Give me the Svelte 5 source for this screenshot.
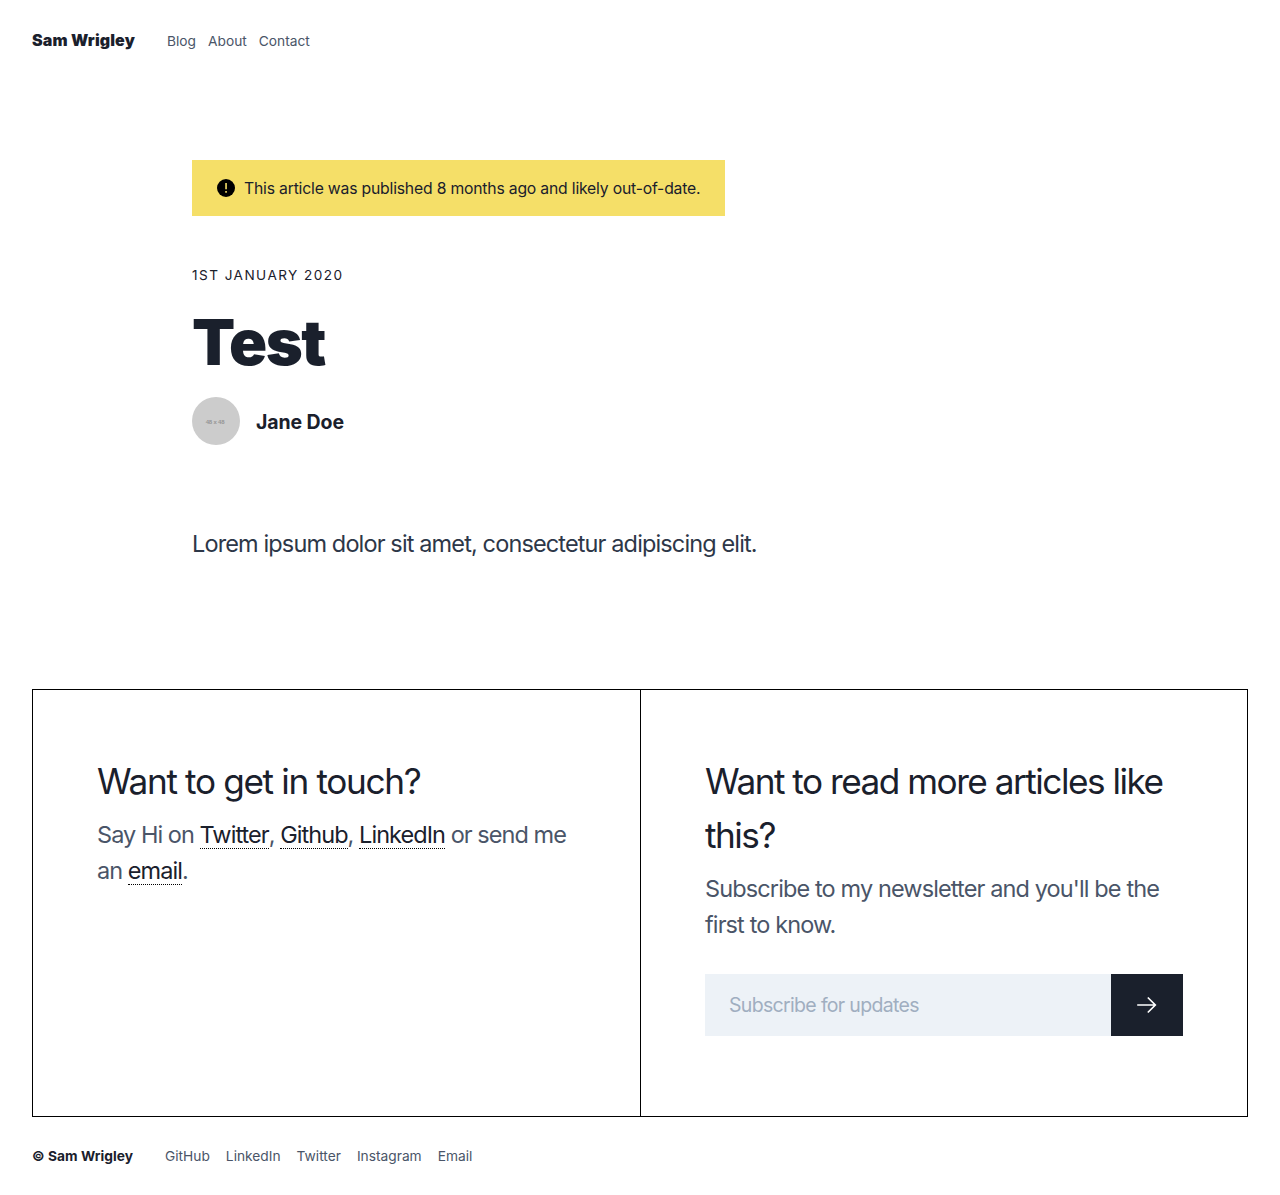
<script>
  const nav = ['Blog', 'About', 'Contact'];
  const social = ['GitHub', 'LinkedIn', 'Twitter', 'Instagram', 'Email'];
</script>

<div class="page">
  <header>
    <a class="brand" href="#home">Sam Wrigley</a>
    <nav>{#each nav as item}<a href="#{item}">{item}</a>{/each}</nav>
  </header>

  <article>
    <div class="notice">
      <svg width="20" height="20" viewBox="0 0 20 20"><circle cx="10" cy="10" r="9" fill="#000" /><path d="M9.25 5h1.6v6.2h-1.6zM9.25 13h1.6v1.7h-1.6z" fill="#f5df68" /></svg>
      <span>This article was published 8 months ago and likely out-of-date.</span>
    </div>
    <time>1st January 2020</time>
    <h1>Test</h1>
    <div class="author">
      <span class="avatar"><span>48 x 48</span></span>
      <strong>Jane Doe</strong>
    </div>
    <p class="body">Lorem ipsum dolor sit amet, consectetur adipiscing elit.</p>
  </article>

  <section class="panels">
    <div class="panel">
      <h2>Want to get in touch?</h2>
      <p>Say Hi on <a href="#tw">Twitter</a>, <a href="#gh">Github</a>, <a href="#li">LinkedIn</a> or send me<br />an <a href="#em">email</a>.</p>
    </div>
    <div class="panel newsletter">
      <h2>Want to read more articles like<br />this?</h2>
      <p>Subscribe to my newsletter and you'll be the<br />first to know.</p>
      <form>
        <input type="email" placeholder="Subscribe for updates" aria-label="Email" />
        <button type="button" aria-label="Subscribe">
          <svg width="24" height="24" viewBox="0 0 24 24" fill="none" stroke="#fff" stroke-width="1.7"><path d="M2.2 12H20.3M12.8 4.5L20.3 12L12.8 19.5" /></svg>
        </button>
      </form>
    </div>
  </section>

  <footer>
    <strong>© Sam Wrigley</strong>
    <nav>{#each social as item}<a href="#{item}">{item}</a>{/each}</nav>
  </footer>
</div>

<style>
  :global(body) { background: #fff; }
  .page { font-family: Inter, sans-serif; color: #1a202c; line-height: 1.5; font-size: 16px; }
  .page, .page * { box-sizing: border-box; }
  a { color: inherit; text-decoration: none; }
  h1, h2, p { margin: 0; font-weight: 400; }
  svg { display: block; flex-shrink: 0; }
  header { display: flex; align-items: center; height: 80px; padding: 0 32px; }
  .brand { font-weight: 900; letter-spacing: 0.12px; width: 135px; white-space: nowrap; }
  header nav { display: flex; gap: 12px; font-size: 13.75px; color: #4a5568; padding-top: 3px; }
  article { margin: 80px 192px 0; height: 529px; }
  .notice { display: flex; align-items: center; gap: 8px; width: 533px; height: 56px; padding: 0 24px; background: #f5df68; white-space: nowrap; font-size: 15.75px; letter-spacing: -0.2px; }
  .notice span { padding-top: 2px; }
  time { display: block; margin-top: 49px; font-size: 13.6px; line-height: 21px; letter-spacing: 1.45px; text-transform: uppercase; }
  h1 { margin-top: 16px; font-size: 63px; line-height: 80px; font-weight: 900; letter-spacing: -1.4px; }
  .author { display: flex; align-items: center; gap: 16px; margin-top: 15px; font-size: 19.5px; }
  .author strong { font-weight: 700; letter-spacing: -0.1px; padding-top: 3px; }
  .avatar { width: 48px; height: 48px; border-radius: 50%; background: #ccc; display: flex; align-items: center; justify-content: center; font-size: 6px; color: #969696; }
  .avatar span { font-family: "Liberation Sans", sans-serif; font-weight: 700; letter-spacing: -0.2px; padding-top: 3px; padding-right: 2px; }
  .body { margin-top: 80px; font-size: 23.5px; line-height: 38px; color: #2d3748; letter-spacing: -0.87px; }
  .panels { display: grid; grid-template-columns: repeat(2, minmax(0, 1fr)); height: 428px; margin: 0 32px; border: 1px solid #000; }
  .panel { padding: 64px; white-space: nowrap; }
  .newsletter { border-left: 1px solid #000; }
  h2 { font-size: 35.2px; line-height: 54px; letter-spacing: -1.35px; }
  .newsletter h2 { letter-spacing: -1.5px; }
  .panel p { font-size: 23.5px; line-height: 36px; letter-spacing: -0.95px; color: #4a5568; margin-top: 9px; }
  .panel.newsletter p { letter-spacing: -0.88px; }
  .panel p a { display: inline-block; line-height: 27px; color: #1a202c; border-bottom: 1px dotted #000; }
  form { display: flex; margin-top: 31px; height: 62px; }
  input { flex: 1; min-width: 0; border: 0; border-radius: 0; background: #edf2f7; padding: 2px 24px 0; font: inherit; font-size: 19.5px; letter-spacing: -0.67px; }
  input::placeholder { color: #a0aec0; opacity: 1; }
  button { width: 72px; padding: 0; border: 0; background: #1a202c; display: flex; align-items: center; justify-content: center; }
  footer { display: flex; align-items: center; height: 79px; padding: 0 32px; font-size: 13.75px; white-space: nowrap; }
  footer strong { width: 133px; font-weight: 700; letter-spacing: 0.05px; }
  footer nav { display: flex; gap: 16px; color: #4a5568; }
</style>
